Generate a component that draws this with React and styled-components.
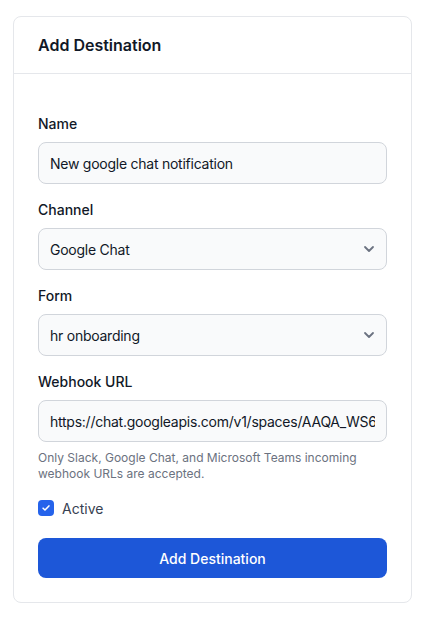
import React, { useState } from "react";
import styled, { createGlobalStyle } from "styled-components";

const GlobalStyle = createGlobalStyle`
  * { box-sizing: border-box; }
  body {
    margin: 0;
    background: #ffffff;
    font-family: Inter, "Noto Sans", sans-serif;
    color: #111827;
  }
`;

const Page = styled.div`
  padding: 16px 11px 24px 13px;
`;

const Card = styled.div`
  border: 1px solid #e5e7eb;
  border-radius: 8px;
  background: #fff;
`;

const CardHeader = styled.div`
  padding: 16px 24px;
  border-bottom: 1px solid #e5e7eb;
`;

const Title = styled.h2`
  margin: 0;
  font-size: 16px;
  line-height: 24px;
  font-weight: 600;
  color: #111827;
`;

const Form = styled.form`
  padding: 40px 24px 24px;
  display: flex;
  flex-direction: column;
  gap: 16px;
`;

const Field = styled.div`
  display: flex;
  flex-direction: column;
`;

const Label = styled.label`
  font-size: 14px;
  line-height: 20px;
  font-weight: 500;
  color: #111827;
  margin-bottom: 8px;
`;

const Input = styled.input`
  width: 100%;
  height: 42px;
  padding: 0 11px;
  border: 1px solid #d1d5db;
  border-radius: 8px;
  background: #f9fafb;
  font-family: inherit;
  font-size: 14px;
  letter-spacing: -0.25px;
  color: #111827;
  outline: none;
`;

const SelectWrap = styled.div`
  position: relative;
`;

const Select = styled.select`
  width: 100%;
  height: 42px;
  padding: 0 36px 0 11px;
  border: 1px solid #d1d5db;
  border-radius: 8px;
  background: #f9fafb;
  font-family: inherit;
  font-size: 14px;
  letter-spacing: -0.25px;
  color: #111827;
  appearance: none;
  outline: none;
`;

const Chevron = styled.svg`
  position: absolute;
  right: 8px;
  top: 50%;
  width: 20px;
  height: 20px;
  transform: translateY(-50%);
  pointer-events: none;
`;

const Help = styled.p`
  margin: 8px 0 0;
  font-size: 12px;
  line-height: 16px;
  color: #6b7280;
`;

const CheckRow = styled.label`
  display: flex;
  align-items: center;
  gap: 8px;
  height: 20px;
  font-size: 14px;
  color: #374151;
`;

const Box = styled.span`
  width: 16px;
  height: 16px;
  border-radius: 4px;
  background: ${(p) => (p.checked ? "#2563eb" : "#f9fafb")};
  border: ${(p) => (p.checked ? "none" : "1px solid #d1d5db")};
  display: flex;
  align-items: center;
  justify-content: center;
`;

const Button = styled.button`
  margin-top: 4px;
  height: 40px;
  border: none;
  border-radius: 8px;
  background: #1d57d8;
  color: #fff;
  font-family: inherit;
  font-size: 14px;
  font-weight: 500;
  cursor: pointer;
`;

function SelectField({ value, options }) {
  return (
    <SelectWrap>
      <Select defaultValue={value}>
        {options.map((o) => (
          <option key={o}>{o}</option>
        ))}
      </Select>
      <Chevron viewBox="0 0 20 20" fill="none">
        <path
          d="M6 8l4 4 4-4"
          stroke="#6b7280"
          strokeWidth="1.8"
          strokeLinecap="round"
          strokeLinejoin="round"
        />
      </Chevron>
    </SelectWrap>
  );
}

export default function App() {
  const [active, setActive] = useState(true);

  return (
    <Page>
      <GlobalStyle />
      <Card>
        <CardHeader>
          <Title>Add Destination</Title>
        </CardHeader>
        <Form onSubmit={(e) => e.preventDefault()}>
          <Field>
            <Label>Name</Label>
            <Input defaultValue="New google chat notification" />
          </Field>
          <Field>
            <Label>Channel</Label>
            <SelectField
              value="Google Chat"
              options={["Slack", "Google Chat", "Microsoft Teams"]}
            />
          </Field>
          <Field>
            <Label>Form</Label>
            <SelectField value="hr onboarding" options={["hr onboarding"]} />
          </Field>
          <Field>
            <Label>Webhook URL</Label>
            <Input defaultValue="https://chat.googleapis.com/v1/spaces/AAQA_WS6xyz/messages" />
            <Help>
              Only Slack, Google Chat, and Microsoft Teams incoming webhook URLs
              are accepted.
            </Help>
          </Field>
          <CheckRow onClick={() => setActive(!active)}>
            <Box checked={active}>
              {active && (
                <svg width="10" height="10" viewBox="0 0 12 12" fill="none">
                  <path
                    d="M2.5 6.2l2.3 2.3 4.7-5"
                    stroke="#fff"
                    strokeWidth="1.8"
                    strokeLinecap="round"
                    strokeLinejoin="round"
                  />
                </svg>
              )}
            </Box>
            Active
          </CheckRow>
          <Button type="submit">Add Destination</Button>
        </Form>
      </Card>
    </Page>
  );
}
